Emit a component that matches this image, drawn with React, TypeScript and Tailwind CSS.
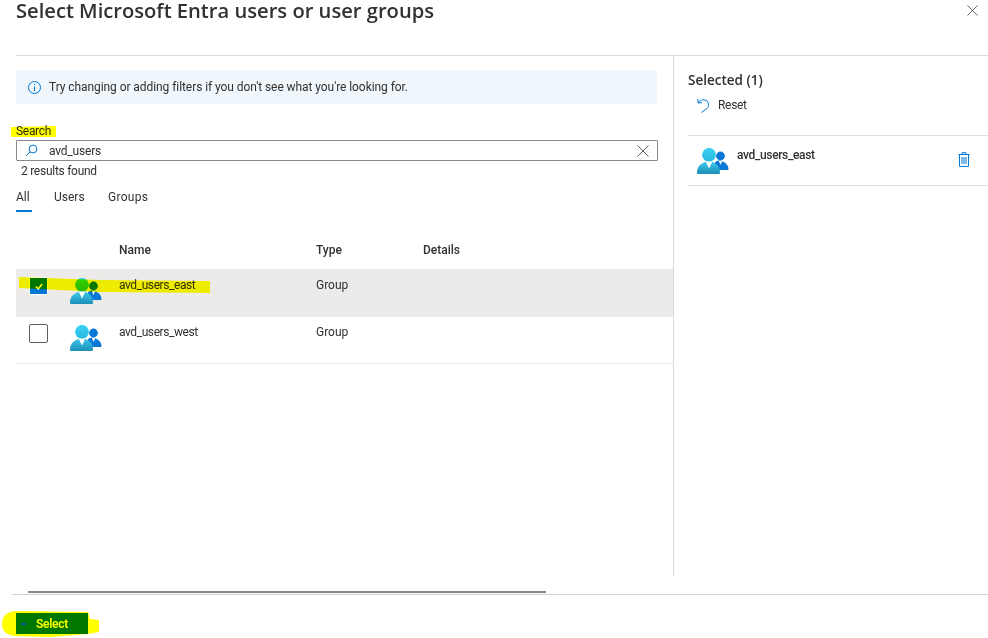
import { useId } from "react";

const GroupIcon = ({ className = "" }: { className?: string }) => {
  const id = useId();
  return (
    <svg viewBox="0 0 32 26" width="32" height="26" className={className}>
      <defs>
        <linearGradient id={id + "h"} x1="0" y1="0" x2="0" y2="1">
          <stop offset="0" stopColor="#3ad4f5" />
          <stop offset="1" stopColor="#28b8e0" />
        </linearGradient>
        <linearGradient id={id + "b"} x1="0" y1="0" x2="0" y2="1">
          <stop offset="0" stopColor="#3cc8ea" />
          <stop offset="1" stopColor="#1d8fb8" />
        </linearGradient>
      </defs>
      <circle cx="23.5" cy="8" r="4.4" fill="#0a78d6" />
      <path d="M18 22 L18 14.5 C19 13 21 12.5 23.5 12.5 C28 14 31.5 17 31.5 21 C31.5 21.6 31 22 30.4 22 Z" fill="#0a78d6" />
      <path d="M21.8 13 L25.2 13 L23.5 17 Z" fill="#ffffff" />
      <circle cx="12" cy="6.8" r="6.9" fill={`url(#${id}h)`} />
      <path d="M0 24.5 C0 19.5 2.5 16.5 8 14 L16 14 C20.5 16.5 23 19.5 23 24.5 C23 25.5 22.5 26 21.5 26 L1.5 26 C0.5 26 0 25.5 0 24.5 Z" fill={`url(#${id}b)`} />
      <path d="M8.8 13.8 L15.2 13.8 L12 20.5 Z" fill="#ffffff" />
    </svg>
  );
};

const XIcon = ({ size }: { size: number }) => (
  <svg viewBox="0 0 12 12" width={size} height={size} fill="none" stroke="#4a4948" strokeWidth="0.9">
    <path d="M0.5 0.5 L11.5 11.5 M11.5 0.5 L0.5 11.5" />
  </svg>
);

const rows = [
  { name: "avd_users_east", selected: true, h: "h-[48px] pt-[8px] bg-[#edebe9]" },
  { name: "avd_users_west", selected: false, h: "h-[47px] pt-[7px] border-b border-[#edebe9]" },
];

export default function App() {
  return (
    <div className="relative w-[988px] h-[638px] overflow-hidden bg-white font-['Roboto',sans-serif] text-[12px] leading-4 text-[#323130]">
      <div className="ml-4 h-[56px] flex justify-between border-b border-[#d9d9d9] pr-[10px]">
        <h1 className="font-['Open_Sans',sans-serif] text-[20.15px] leading-7 font-semibold -mt-1">Select Microsoft Entra users or user groups</h1>
        <div className="mt-[5px]">
          <XIcon size={11} />
        </div>
      </div>

      <div className="flex h-[520px]">
        <div className="ml-4 w-[658px] border-r border-[#d9d9d9]">
          <div className="mt-[14px] mr-4 h-[34px] bg-[#eff6fc] flex items-center pl-[12px] gap-2">
            <svg viewBox="0 0 13 13" width="13" height="13" fill="none" stroke="#0078d4" strokeWidth="1">
              <circle cx="6.5" cy="6.5" r="6" />
              <path d="M6.5 5.5 V10 M6.5 3 V4.2" />
            </svg>
            <span className="tracking-[-0.07px]">Try changing or adding filters if you don't see what you're looking for.</span>
          </div>

          <div className="mt-[19px] tracking-[-0.3px]">Search</div>
          <div className="mt-px mr-[15px] h-[21px] border border-[#8a8886] rounded-[1px] flex items-center pl-[8px] pr-[8px]">
            <svg viewBox="0 0 13 13" width="13" height="13" fill="none" stroke="#0078d4" strokeWidth="1">
              <circle cx="8" cy="5" r="3.9" />
              <path d="M5 8 L1 12" />
            </svg>
            <span className="ml-[11px] flex-1 tracking-[-0.2px]">avd_users</span>
            <XIcon size={12} />
          </div>
          <div className="mt-[2px] ml-[5px] tracking-[-0.27px]">2 results found</div>

          <div className="mt-[10px] flex">
            <div className="w-[38px]">
              <div className="w-4 pb-[5px] border-b-2 border-[#0078d4] font-normal">All</div>
            </div>
            <div className="w-[54px]">Users</div>
            <div className="tracking-[0.3px]">Groups</div>
          </div>

          <div className="grid grid-cols-[103px_197px_107px_1fr] pt-[30px] h-[57px] font-medium">
            <div />
            <div>Name</div>
            <div>Type</div>
            <div>Details</div>
          </div>

          {rows.map((row) => (
            <div key={row.name} className={`grid grid-cols-[103px_197px_107px_1fr] ${row.h}`}>
              <div className="flex items-start pl-[13px]">
                {row.selected ? (
                  <div className="w-[19px] h-[18px] bg-[#0078d4] border border-white flex items-center justify-center">
                    <svg viewBox="0 0 10 8" width="8" height="7" fill="none" stroke="#ffffff" strokeWidth="2">
                      <path d="M1 4 L4 7 L9 1" />
                    </svg>
                  </div>
                ) : (
                  <div className="w-[19px] h-[19px] border border-[#605e5c] rounded-[2px] bg-white" />
                )}
                <GroupIcon className="ml-[22px] mt-px" />
              </div>
              <div className="tracking-[-0.42px]">{row.name}</div>
              <div>Group</div>
              <div />
            </div>
          ))}
        </div>

        <div className="flex-1 pl-[14px]">
          <div className="mt-[14px] font-['Open_Sans',sans-serif] text-[13.5px] leading-5 font-semibold">Selected (1)</div>
          <div className="mt-[7px] ml-[9px] flex items-center gap-[8px]">
            <svg viewBox="0 0 13 15" width="13" height="15" fill="none" stroke="#0078d4" strokeWidth="1">
              <path d="M0.8 1 L1.2 5 L5 4.6 M1.2 5 C3 2 6 1.2 9 2.4 C12 4 12.5 8 10 10.5 L4.5 14.5" />
            </svg>
            <span className="tracking-[-0.3px]">Reset</span>
          </div>
          <div className="mt-[22px] h-[51px] border-y border-[#e1dfdd] flex pl-[9px] pr-[18px]">
            <GroupIcon className="mt-[12px]" />
            <span className="ml-[8px] mt-[11px] flex-1 font-medium tracking-[-0.35px]">avd_users_east</span>
            <svg viewBox="0 0 12 15" width="12" height="15" fill="none" stroke="#0078d4" strokeWidth="1" className="mt-[16px]">
              <path d="M0.5 2.5 H11.5 M4 2 V0.7 H8 V2 M1.5 2.5 V14.4 H10.5 V2.5 M4 5 V12 M6 5 V12 M8 5 V12" />
            </svg>
          </div>
        </div>
      </div>

      <div className="mt-[15px] ml-[28px] w-[518px] h-[2px] bg-[#8a8886]" />
      <div className="mt-px ml-3 border-t border-[#d2d0ce] pt-[18px] pl-1">
        <button className="w-[72px] h-[21px] bg-[#0078d4] text-white font-semibold tracking-[-0.3px] flex items-center justify-center">Select</button>
      </div>

      <svg className="absolute inset-0 pointer-events-none mix-blend-multiply" width="988" height="638" viewBox="0 0 988 638">
        <path d="M11 127 L56 126 L56 137 L11 137 Z" fill="#ffff00" />
        <path d="M19 277 L100 280 L210 281 L210 293 L100 292 L19 288 Z" fill="#ffff00" />
        <path d="M14 611 L88 612 L90 619 L99 620 L99 632 L88 634 L50 637 L14 636 Q2 634 2 624 Q2 613 14 611 Z" fill="#ffff00" />
      </svg>
      <div className="absolute left-[21px] top-[623px] w-[5px] h-[2px] bg-[#0a62a8]" />
    </div>
  );
}
